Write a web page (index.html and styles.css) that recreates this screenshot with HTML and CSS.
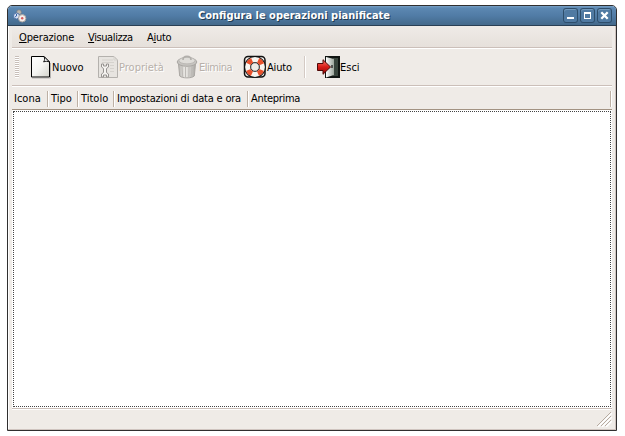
FILE: index.html
```html
<!DOCTYPE html>
<html lang="it">
<head>
<meta charset="utf-8">
<title>Configura le operazioni pianificate</title>
<link rel="stylesheet" href="styles.css">
</head>
<body>
<div class="window">
  <header class="titlebar">
    <svg class="app-icon" width="14" height="14" viewBox="0 0 14 14">
      <circle cx="6" cy="3.2" r="2.4" fill="#b9b5ad" stroke="#777d84" stroke-width=".7"/>
      <circle cx="3.5" cy="7" r="3" fill="#d5e1f4" stroke="#5272a5"/>
      <path d="M3.5 5v2L2 8" fill="none" stroke="#3763aa"/>
      <circle cx="9.2" cy="9.3" r="3.7" fill="#f5eeeb" stroke="#a7a19e"/>
      <circle cx="9.2" cy="9.3" r="1.2" fill="#d55c5c"/>
    </svg>
    <h1 class="title">Configura le operazioni pianificate</h1>
    <div class="controls">
      <span class="control"><svg width="15" height="15"><path d="M4 10h7" stroke="#fff" stroke-width="2"/></svg></span>
      <span class="control"><svg width="15" height="15"><path d="M4 4h7v7H4zM5 6v4h5V6z" fill="#fff" fill-rule="evenodd"/></svg></span>
      <span class="control"><svg width="15" height="15"><path d="M4.3 4.3l6.4 6.4m0-6.4l-6.4 6.4" stroke="#fff" stroke-width="2.3"/></svg></span>
    </div>
  </header>
  <div class="content">
    <nav class="menu">
      <span class="m1"><u>O</u>perazione</span>
      <span class="m2"><u>V</u>isualizza</span>
      <span class="m3">A<u>i</u>uto</span>
    </nav>
    <div class="toolbar">
      <i class="grip"></i>
      <div class="tool new">
        <svg width="22" height="24" viewBox="0 0 22 24">
          <defs><linearGradient id="paper" x2="1" y2="1"><stop stop-color="#fff"/><stop offset=".5" stop-color="#f5f5f2"/><stop offset="1" stop-color="#d2d2ca"/></linearGradient></defs>
          <path d="M1.5 1.5h12.5l5.5 5.5v15h-18z" fill="url(#paper)" stroke="#000"/>
          <path d="M14 1.5c1 2 .6 4-.4 5.4 2-.8 4-.7 5.9.1z" fill="#eee" stroke="#000" stroke-width=".9"/>
          <path d="M2 23h18.500V8" fill="none" stroke="#888" stroke-opacity=".55"/>
        </svg>
        <span>Nuovo</span>
      </div>
      <div class="tool props off">
        <svg width="22" height="24" viewBox="0 0 22 24">
          <path d="M1.500 1.500h15.500l3.500 3.500v17.500h-19z" fill="#e7e4e0" stroke="#b4b1ad"/>
          <path d="M17 1.500v3.500h3.500M5 5h11M5 7.500h12M13 10.500h4M13 13.500h4M13 16.500h4" fill="none" stroke="#d5d2cd"/>
          <path d="M4.500 9v3l2 1.500v4l-2 1.500v3h2v-2h3v2h2v-3l-2-1.500v-4l2-1.500v-3h-2v2h-3v-2z" fill="#f5f3f0" stroke="#969390"/>
        </svg>
        <span>Proprietà</span>
      </div>
      <div class="tool trash off">
        <svg width="22" height="24" viewBox="0 0 22 24">
          <defs><linearGradient id="bin"><stop stop-color="#b9b7b3"/><stop offset=".4" stop-color="#edebe7"/><stop offset="1" stop-color="#aaa8a4"/></linearGradient></defs>
          <path d="M2.500 9l1.200 12c2.500 2.500 12 2.500 14.600 0l1.200-12z" fill="url(#bin)" stroke="#aaa7a3"/>
          <path d="M6 11l.7 11M9.500 12v11M13 12l-.2 11M16 11l-.8 11" stroke="#bdbab6"/>
          <ellipse cx="11" cy="7" rx="9.800" ry="4.300" fill="#c6c4c0" stroke="#aaa7a3"/>
          <ellipse cx="11" cy="5.600" rx="8" ry="3.300" fill="#dfddd9" stroke="#bbb8b4"/>
          <path d="M7 5c0-5 8-5 8 0" fill="none" stroke="#b2afab" stroke-width="1.600"/>
        </svg>
        <span>Elimina</span>
      </div>
      <div class="tool help">
        <svg width="24" height="24" viewBox="0 0 24 24">
          <rect x="1.500" y="1.500" width="20.500" height="20.500" rx="3.500" fill="#efebe7" stroke="#111" stroke-width="1.500"/>
          <circle cx="12" cy="12" r="7.300" fill="none" stroke="#111" stroke-width="7"/>
          <circle cx="12" cy="12" r="7.300" fill="none" stroke="#f8f5f0" stroke-width="5.200"/>
          <g transform="rotate(24 12 12)"><circle cx="12" cy="12" r="7.300" fill="none" stroke="#e8512c" stroke-width="5.200" stroke-dasharray="5.300 6.167"/></g>
          <circle cx="12" cy="12" r="4.300" fill="#efebe6" stroke="#333" stroke-width=".9"/>
        </svg>
        <span>Aiuto</span>
      </div>
      <i class="divider"></i>
      <div class="tool exit">
        <svg width="24" height="24" viewBox="0 0 24 24">
          <defs><linearGradient id="door"><stop stop-color="#fff"/><stop offset="1" stop-color="#9ba59b"/></linearGradient><linearGradient id="arrow" x2="0" y2="1"><stop stop-color="#fa776a"/><stop offset=".5" stop-color="#d71c16"/><stop offset="1" stop-color="#8f0808"/></linearGradient></defs>
          <path d="M9 1h15v22H9z" fill="#101512"/>
          <path d="M17 3h5v18h-5z" fill="#39453d"/>
          <path d="M10 2l8 2v16l-8 2.500z" fill="url(#door)"/>
          <path d="M16 10v3" stroke="#333" stroke-width="1.500"/>
          <path d="M1.500 8.500H7V4.700l7.500 7.300L7 19.300v-3.800H1.500z" fill="url(#arrow)" stroke="#4e0806"/>
        </svg>
        <span>Esci</span>
      </div>
    </div>
    <div class="columns">
      <span class="c1"><b>Icona</b></span><span class="c2"><b>Tipo</b></span><span class="c3"><b>Titolo</b></span><span class="c4"><b>Impostazioni di data e ora</b></span><span class="c5"><b>Anteprima</b></span>
    </div>
    <main class="list"></main>
    <footer class="status">
      <svg width="15" height="15" viewBox="0 0 15 15"><path d="M1 15L15 1M5 15L15 5M9 15l6-6" stroke="#fff" stroke-width="1.500"/><path d="M0 14L14 0M4 14L14 4M8 14l6-6" stroke="#b6aaa0"/></svg>
    </footer>
  </div>
</div>
</body>
</html>
```
FILE: styles.css
```css
*, *::before { box-sizing: border-box; }
body { margin: 0; background: #fff; padding: 5px 8px 0 7px; color: #000; font: 11px/14px "DejaVu Sans Condensed", "DejaVu Sans", sans-serif; font-stretch: condensed; }
svg { display: block; flex: none; }
.window { height: 426px; border: 1px solid #302f2f; border-radius: 5px 5px 0 0; background: #efebe7; box-shadow: inset -1px -1px #cfc4bf, inset 1px 0 #fff; overflow: hidden; }
.titlebar { height: 20px; display: flex; align-items: center; background: linear-gradient(#79a1c6 0, #5c88b2 2px, #507ba5 10px, #456b8d 18px); border-bottom: 1px solid #293f54; padding: 0 4px 0 5px; }
.title { flex: 1; margin: 0; padding-left: 171px; font-size: 11px; line-height: 19px; color: #fff; text-shadow: 1px 1px #223b51; white-space: nowrap; }
.controls { display: flex; gap: 2px; }
.control { width: 15px; height: 15px; border-radius: 3px; box-shadow: inset 0 0 0 1px #2e4e6b, inset 1px 2px #7299bc; background: #507aa2; }
.content { margin: 0 4px; }
.menu { height: 22px; display: flex; padding: 5px 0 0 7px; background: linear-gradient(#efebe7, #e6e0db); border-bottom: 1px solid #cbbfb9; letter-spacing: -.15px; }
.menu span { white-space: nowrap; }
.menu u { text-underline-offset: 1px; text-decoration-thickness: 1px; }
.m1 { width: 69px; }
.m2 { width: 59px; }
.m2, .m3 { letter-spacing: -.3px; }
.m2 { letter-spacing: -.35px; }
.menu .m2 { letter-spacing: -.4px; }
.toolbar { height: 38px; display: flex; align-items: center; border-top: 1px solid #fff; border-bottom: 1px solid #cbbfb9; }
.grip { width: 4px; height: 22px; margin-left: 3px; background: repeating-linear-gradient(#c8bfb9 0 1px, #fff 1px 2px); }
.tool { display: flex; align-items: center; height: 24px; white-space: nowrap; }
.tool span { padding-top: 1px; }
.new { width: 67px; margin-left: 11px; }
.props { width: 79px; }
.trash { width: 67px; }
.trash span { letter-spacing: -.5px; margin-left: 1px; }
.help { width: 61px; }
.help span { letter-spacing: -.15px; }
.off { color: #b7b0aa; text-shadow: 1px 1px #fff; }
.divider { width: 2px; height: 22px; border-left: 1px solid #d4cac4; border-right: 1px solid #fff; }
.exit { margin-left: 10px; }
.columns { height: 24px; display: flex; padding: 4px 1px 3px 0; border-top: 1px solid #fff; border-bottom: 1px solid #a29282; }
.columns span { height: 16px; border-right: 1px solid #bdb0a4; box-shadow: 1px 0 #fff; padding-left: 3px; line-height: 16px; white-space: nowrap; }
.columns b { font-weight: normal; }
.columns .c1 { width: 36px; padding-left: 2px; }
.c2 { width: 30px; }
.c3 { width: 36px; }
.c4 { width: 134px; letter-spacing: -.2px; }
.c5 { flex: 1; letter-spacing: -.3px; }
.list { height: 298px; background: #fff; padding: 1px; }
.list::before { content: ""; display: block; height: 296px; border: 1px dotted #444; }
.status { height: 21px; border-top: 1px solid #cbbfb9; box-shadow: inset 0 1px #fff; display: flex; justify-content: flex-end; align-items: flex-start; padding: 3px 0 0; }
```
